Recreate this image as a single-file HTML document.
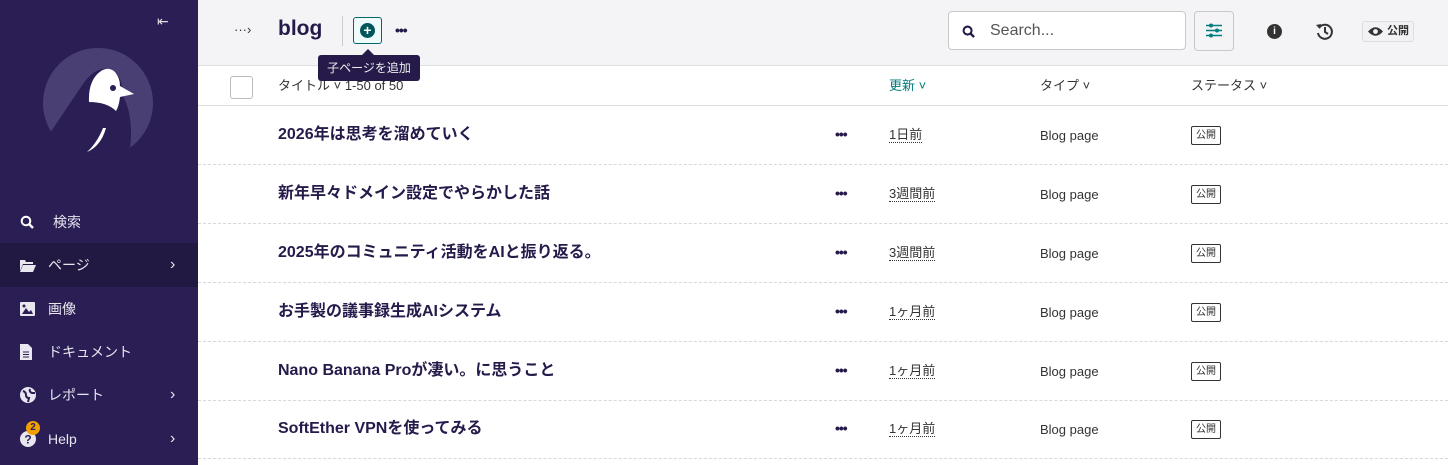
<!DOCTYPE html>
<html><head><meta charset="utf-8"><style>
*{box-sizing:border-box;margin:0;padding:0}
body{width:1448px;height:465px;overflow:hidden;font-family:"Liberation Sans","Noto Sans CJK JP",sans-serif;background:#fff;position:relative;color:#261a4a}
.sb{position:absolute;left:0;top:0;width:198px;height:465px;background:#2a1e55;color:#e8e6ef}
.nav{position:absolute;left:0;width:198px;height:44px;font-size:14px;display:flex;align-items:center}
.nav svg{position:absolute;left:20px}
.nav .t{position:absolute;left:48px}
.nav .ch{position:absolute;left:170px;font-size:16px}
.hdr{position:absolute;left:198px;top:0;right:0;height:66px;background:#f4f4f6;border-bottom:1px solid #dedee3}
.th{position:absolute;top:67px;left:198px;right:0;height:39px;border-bottom:1px solid #dedee3;font-size:13px;color:#333;line-height:16px}
.row{position:absolute;left:198px;right:0;height:59px;border-bottom:1px dashed #d8d8d8}
.row .ti{position:absolute;left:80px;top:19px;font-size:16px;line-height:20px;font-weight:bold;color:#261a4a}
.row .dots{position:absolute;left:637px;top:20px;font-size:14px;font-weight:bold;letter-spacing:-1px}
.row .d{position:absolute;left:691px;top:22px;font-size:13px;color:#333;border-bottom:1px dotted #333;line-height:14px}
.row .ty{position:absolute;left:842px;top:22px;font-size:13px;color:#333}
.row .st{position:absolute;left:993px;top:20px;font-size:10px;color:#333;border:1px solid #333;border-radius:2px;padding:2px 4px;line-height:13px}
</style></head><body>
<div class="sb">
<div style="position:absolute;left:157px;top:13px;font-size:14px;color:#ddd">&#8676;</div>
<svg style="position:absolute;left:43px;top:48px" width="110" height="110" viewBox="0 0 110 110">
<defs><clipPath id="c"><circle cx="55" cy="55" r="55"/></clipPath></defs>
<circle cx="55" cy="55" r="55" fill="#4a3f72"/>
<g clip-path="url(#c)">
<path d="M5 88 L40 36 Q52 18 68 21 Q80 28 80 48 Q92 70 86 110 L30 112 Q12 104 5 88Z" fill="#2a1e55"/>
</g>
<path d="M46 54 Q45 32 58 23 Q66 18 72 24 Q77 30 77 38 L91 46 L77 49 Q76 58 73 63 Q64 54 46 54Z" fill="#fff"/>
<circle cx="70" cy="40" r="3" fill="#2a1e55"/>
<path d="M63 80 Q58 98 44 104 Q54 95 60 80Z" fill="#fff"/>
</svg>
<div class="nav" style="top:200px"><svg width="14" height="14" viewBox="0 0 14 14"><circle cx="6" cy="6" r="4.3" stroke="#fff" stroke-width="2" fill="none"/><path d="M9 9l4 4" stroke="#fff" stroke-width="2.4"/></svg><span class="t" style="left:53px">検索</span></div>
<div class="nav" style="top:243px;background:#211941"><svg width="16" height="13" viewBox="0 0 16 13"><path d="M0 1h5l1 2h7v2H3L0 12z M3 6h13l-3 7H0z" fill="#e8e6ef"/></svg><span class="t">ページ</span><span class="ch">›</span></div>
<div class="nav" style="top:287px"><svg width="15" height="14" viewBox="0 0 15 14"><rect x="0" y="0" width="15" height="14" rx="1" fill="#e8e6ef"/><path d="M2 12l4-6 3 4 2-2 2 4z" fill="#2a1e55"/><circle cx="4" cy="4" r="1.5" fill="#2a1e55"/></svg><span class="t">画像</span></div>
<div class="nav" style="top:330px"><svg width="12" height="16" viewBox="0 0 12 16"><path d="M0 0h8l4 4v12H0z" fill="#e8e6ef"/><path d="M3 8h6M3 10.5h6M3 13h6" stroke="#2a1e55"/></svg><span class="t">ドキュメント</span></div>
<div class="nav" style="top:373px"><svg width="16" height="16" viewBox="0 0 16 16"><circle cx="8" cy="8" r="8" fill="#e8e6ef"/><path d="M3 4q3 1 3 4t3 3l-1 4M10 2q-1 3 2 4l3 0" stroke="#2a1e55" stroke-width="2" fill="none"/></svg><span class="t">レポート</span><span class="ch">›</span></div>
<div class="nav" style="top:417px"><svg width="16" height="16" viewBox="0 0 16 16"><circle cx="8" cy="8" r="8" fill="#e8e6ef"/><text x="8" y="12.5" text-anchor="middle" font-size="12" font-weight="bold" fill="#2a1e55" font-family="Liberation Sans">?</text></svg><span class="t">Help</span><span class="ch">›</span></div>
<div style="position:absolute;left:26px;top:421px;width:14px;height:14px;border-radius:7px;background:#f0a000;color:#2a1e55;font-size:10px;font-weight:bold;text-align:center;line-height:14px">2</div>
</div>
<div class="hdr">
<div style="position:absolute;left:36px;top:22px;font-size:13px;color:#333">···›</div>
<div style="position:absolute;left:80px;top:17px;font-size:21px;font-weight:bold;color:#261a4a">blog</div>
<div style="position:absolute;left:144px;top:16px;width:1px;height:30px;background:#ccc"></div>
<div style="position:absolute;left:155px;top:17px;width:29px;height:27px;border:1.5px solid #00676a;border-radius:3px;background:#effafa"></div>
<div style="position:absolute;left:162px;top:23px;width:15px;height:15px;border-radius:8px;background:#00565a;color:#fff;font-size:14px;font-weight:bold;text-align:center;line-height:15px">+</div>
<div style="position:absolute;left:197px;top:22px;font-size:14px;font-weight:bold;color:#261a4a;letter-spacing:-1px">•••</div>
<div style="position:absolute;left:750px;top:11px;width:238px;height:39px;background:#fff;border:1px solid #c8c8c8;border-radius:4px"></div>
<svg style="position:absolute;left:764px;top:25px" width="13" height="13" viewBox="0 0 14 14"><circle cx="6" cy="6" r="4.3" stroke="#261a4a" stroke-width="2.2" fill="none"/><path d="M9 9l4 4" stroke="#261a4a" stroke-width="2.6"/></svg>
<div style="position:absolute;left:792px;top:22px;font-size:16px;color:#555">Search...</div>
<div style="position:absolute;left:996px;top:11px;width:40px;height:40px;border:1px solid #c8c8c8;border-radius:4px"></div>
<svg style="position:absolute;left:1008px;top:23px" width="16" height="15" viewBox="0 0 16 15"><path d="M0 2.5h16M0 7.5h16M0 12.5h16" stroke="#007d7e" stroke-width="1.6"/><circle cx="5" cy="2.5" r="2" fill="#007d7e"/><circle cx="11" cy="7.5" r="2" fill="#007d7e"/><circle cx="5" cy="12.5" r="2" fill="#007d7e"/></svg>
<div style="position:absolute;left:1069px;top:24px;width:15px;height:15px;border-radius:8px;background:#333;color:#fff;font-size:10px;font-weight:bold;text-align:center;line-height:15px">i</div>
<svg style="position:absolute;left:1118px;top:23px" width="17" height="17" viewBox="0 0 17 17"><path d="M3 5A7 7 0 1 1 2 10" stroke="#333" stroke-width="2" fill="none"/><path d="M0 2l4 4 1-5z" fill="#333"/><path d="M9 4v5l3 2" stroke="#333" stroke-width="2" fill="none"/></svg>
<div style="position:absolute;left:1164px;top:21px;width:52px;height:21px;border:1px solid #ddd;border-radius:3px;background:#f2f2f4;font-size:11px;font-weight:bold;color:#333;line-height:19px;padding-left:24px">公開</div>
<svg style="position:absolute;left:1170px;top:26px" width="15" height="11" viewBox="0 0 15 11"><path d="M0 5.5Q7.5-3 15 5.5Q7.5 14 0 5.5z" fill="#333"/><circle cx="7.5" cy="5.5" r="2.4" fill="#f2f2f4"/></svg>
</div>
<div class="th">
<div style="position:absolute;left:32px;top:9px;width:23px;height:23px;border:1px solid #bbb;border-radius:3px"></div>
<div style="position:absolute;left:80px;top:11px">タイトル ˅ 1-50 of 50</div>
<div style="position:absolute;left:691px;top:11px;color:#007d7e">更新 ˅</div>
<div style="position:absolute;left:842px;top:11px">タイプ ˅</div>
<div style="position:absolute;left:993px;top:11px">ステータス ˅</div>
</div>
<div style="position:absolute;left:318px;top:55px;width:102px;height:26px;background:#261a4a;color:#eee;font-size:12px;line-height:26px;text-align:center;border-radius:3px">子ページを追加</div>
<div style="position:absolute;left:362px;top:49px;width:0;height:0;border-left:6px solid transparent;border-right:6px solid transparent;border-bottom:6px solid #261a4a"></div>
<div class="row" style="top:106px"><span class="ti">2026年は思考を溜めていく</span><span class="dots">•••</span><span class="d">1日前</span><span class="ty">Blog page</span><span class="st">公開</span></div>
<div class="row" style="top:165px"><span class="ti">新年早々ドメイン設定でやらかした話</span><span class="dots">•••</span><span class="d">3週間前</span><span class="ty">Blog page</span><span class="st">公開</span></div>
<div class="row" style="top:224px"><span class="ti">2025年のコミュニティ活動をAIと振り返る。</span><span class="dots">•••</span><span class="d">3週間前</span><span class="ty">Blog page</span><span class="st">公開</span></div>
<div class="row" style="top:283px"><span class="ti">お手製の議事録生成AIシステム</span><span class="dots">•••</span><span class="d">1ヶ月前</span><span class="ty">Blog page</span><span class="st">公開</span></div>
<div class="row" style="top:342px"><span class="ti">Nano Banana Proが凄い。に思うこと</span><span class="dots">•••</span><span class="d">1ヶ月前</span><span class="ty">Blog page</span><span class="st">公開</span></div>
<div class="row" style="top:400px"><span class="ti">SoftEther VPNを使ってみる</span><span class="dots">•••</span><span class="d">1ヶ月前</span><span class="ty">Blog page</span><span class="st">公開</span></div>
</body></html>
